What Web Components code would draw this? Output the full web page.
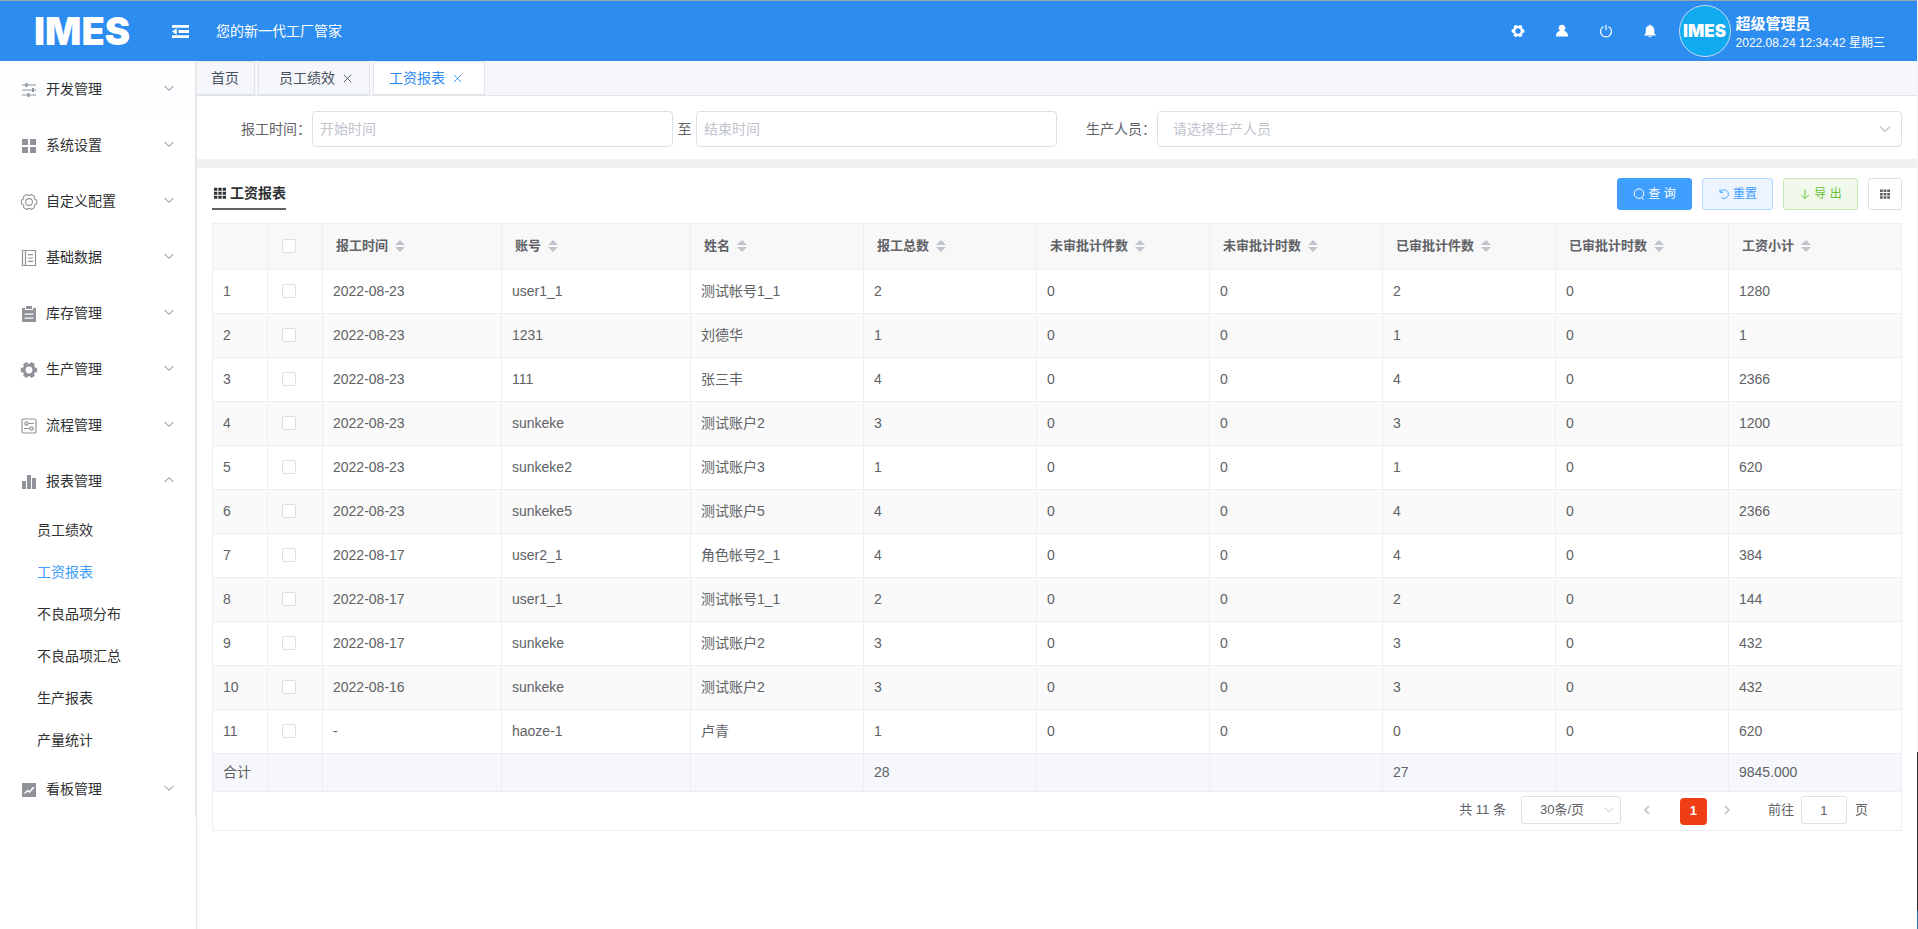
<!DOCTYPE html>
<html lang="zh-CN">
<head>
<meta charset="utf-8">
<title>IMES 工资报表</title>
<style>
  html, body { margin: 0; }
  body {
    font-family: "Liberation Sans", "Noto Sans CJK SC", sans-serif;
    font-size: 14px;
    line-height: 20px;
    color: #606266;
    background: #fff;
  }
</style>
</head>
<body>
<mes-app>
  <mes-header slot="header" slogan="您的新一代工厂管家" user="超级管理员" time="2022.08.24 12:34:42 星期三"></mes-header>
  <mes-menu slot="menu">
    <mes-menu-group icon="operation" label="开发管理" hovered></mes-menu-group>
    <mes-menu-group icon="menu" label="系统设置"></mes-menu-group>
    <mes-menu-group icon="setting" label="自定义配置"></mes-menu-group>
    <mes-menu-group icon="notebook" label="基础数据"></mes-menu-group>
    <mes-menu-group icon="order" label="库存管理"></mes-menu-group>
    <mes-menu-group icon="tools" label="生产管理"></mes-menu-group>
    <mes-menu-group icon="setup" label="流程管理"></mes-menu-group>
    <mes-menu-group icon="data" label="报表管理" open>
      <mes-menu-link>员工绩效</mes-menu-link>
      <mes-menu-link active>工资报表</mes-menu-link>
      <mes-menu-link>不良品项分布</mes-menu-link>
      <mes-menu-link>不良品项汇总</mes-menu-link>
      <mes-menu-link>生产报表</mes-menu-link>
      <mes-menu-link>产量统计</mes-menu-link>
    </mes-menu-group>
    <mes-menu-group icon="marketing" label="看板管理"></mes-menu-group>
  </mes-menu>
  <mes-tabs>
    <mes-tab>首页</mes-tab>
    <mes-tab closable>员工绩效</mes-tab>
    <mes-tab closable active>工资报表</mes-tab>
  </mes-tabs>
  <mes-filter></mes-filter>
  <mes-panel heading="工资报表">
    <mes-button slot="actions" kind="primary" icon="search">查 询</mes-button>
    <mes-button slot="actions" kind="plain" icon="refresh">重置</mes-button>
    <mes-button slot="actions" kind="success" icon="bottom">导 出</mes-button>
    <mes-button slot="actions" kind="icon" icon="grid" hint="列设置"></mes-button>
    <mes-wage-table></mes-wage-table>
    <mes-pagination></mes-pagination>
  </mes-panel>
</mes-app>

<script>
// Outline of a six-toothed gear centred in the 18-unit icon box.
const gear = (outer, inner) => {
  const points = [];
  for (let a = 0; a < 360; a += 60) {
    for (const [offset, r] of [[-23, inner], [-14, outer], [14, outer], [23, inner]]) {
      const t = (a + offset) * Math.PI / 180;
      points.push(`${(9 + r * Math.cos(t)).toFixed(2)} ${(9 + r * Math.sin(t)).toFixed(2)}`);
    }
  }
  return `M${points.join('L')}Z`;
};

const ICONS = {
  fold: '<path d="M0 2h18v3H0zM7 7.500h11v3H7zM0 13h18v3H0zM0 9l5-3.500v7z"/>',
  operation: '<path d="M2 4h14M2 9h14M2 14h14" fill="none" stroke="currentColor" stroke-width="1.200"/><path d="M5.500 2h2v4h-2zM12 7h2v4h-2zM7.500 12h2v4h-2z"/>',
  menu: '<path d="M2 2h6v6H2zM10 2h6v6h-6zM2 10h6v6H2zM10 10h6v6h-6z"/>',
  setting: `<g fill="none" stroke="currentColor" stroke-width="1.100" stroke-linejoin="round"><path d="${gear(7.8, 6.6)}"/><circle cx="9" cy="9" r="3.400"/></g>`,
  notebook: '<path d="M2.500 1.500h13v15h-13zM5.500 1.500v15" fill="none" stroke="currentColor" stroke-width="1.200"/><path d="M8 5h5v1.200H8zM8 8.400h5v1.200H8zM8 11.800h5V13H8z"/>',
  order: '<path fill-rule="evenodd" d="M2 3h3v2h8V3h3v14H2zM4.500 8.500v1.200h9V8.500zM4.500 12.500v1.200h9v-1.200z"/><path d="M6 1h6v3H6z"/>',
  tools: `<path fill-rule="evenodd" d="${gear(8.4, 6.4)}M9 5.600a3.400 3.400 0 1 0 0 6.800 3.400 3.400 0 0 0 0-6.800z"/>`,
  setup: '<g fill="none" stroke="currentColor" stroke-width="1.200"><rect x="2" y="2" width="14" height="14" rx="1.500"/><circle cx="6.500" cy="6.500" r="1.600"/><path d="M8.200 6.500H14M4 11.500h5.600"/><circle cx="11.500" cy="11.500" r="1.600"/></g>',
  data: '<path d="M2 8h4v8H2zM7 2h4v14H7zM12 5h4v11h-4z"/>',
  marketing: '<path fill-rule="evenodd" d="M2 2h14v14H2zM4 12.200l.9.900 2.700-2.700 2 1.700L14 7.200V6h-1.400L9.500 10 7.600 8.600z"/>',
  down: '<path d="M4 6.500 9 11.500l5-5" fill="none" stroke="currentColor" stroke-width="1.200"/>',
  up: '<path d="M4 11.500 9 6.500l5 5" fill="none" stroke="currentColor" stroke-width="1.200"/>',
  left: '<path d="M11.500 4 6.500 9l5 5" fill="none" stroke="currentColor" stroke-width="2.200"/>',
  right: '<path d="M6.500 4l5 5-5 5" fill="none" stroke="currentColor" stroke-width="2.200"/>',
  close: '<path d="M3 3l12 12M15 3L3 15" fill="none" stroke="currentColor" stroke-width="1.500"/>',
  user: '<path d="M9 1a4.300 4.300 0 0 1 2.600 7.800c3 .7 5 3 5.400 7.200H1c.4-4.200 2.400-6.500 5.400-7.200A4.300 4.300 0 0 1 9 1z"/>',
  power: '<path d="M6 3.200a7 7 0 1 0 6 0M9 1v7" fill="none" stroke="currentColor" stroke-width="1.500"/>',
  bell: '<path d="M8 2V1h2v1c3 .6 4.500 3 4.500 6v4l2 2v.8h-15V14l2-2V8c0-3 1.500-5.400 4.500-6zM6.500 15.600h5c-.5 1.800-4.500 1.800-5 0z"/>',
  search: '<path d="M12.500 14 16 17.300M9 1.300a7.200 7.200 0 1 1 0 14.400A7.200 7.200 0 0 1 9 1.300z" fill="none" stroke="currentColor" stroke-width="1.500"/>',
  refresh: '<path d="M3 2v4.500h4.500M3.300 6.300A6.500 6.500 0 1 1 5 14.200" fill="none" stroke="currentColor" stroke-width="1.400"/>',
  bottom: '<path d="M9 2v14M3.500 10.500 9 16l5.500-5.500" fill="none" stroke="currentColor" stroke-width="1.500"/>',
  grid: '<path d="M0 1h5v4.500H0zM6.500 1h5v4.500h-5zM13 1h5v4.500h-5zM0 7h5v4.500H0zM6.500 7h5v4.500h-5zM13 7h5v4.500h-5zM0 13h5v4.500H0zM6.500 13h5v4.500h-5zM13 13h5v4.500h-5z"/>'
};

const define = (name, render) => customElements.define(name, class extends HTMLElement {
  connectedCallback() {
    if (this.shadowRoot) return;
    const root = this.attachShadow({ mode: 'open' });
    const tpl = document.createElement('template');
    tpl.innerHTML = render(this);
    root.append(tpl.content.cloneNode(true));
  }
});
const attr = (el, n) => el.getAttribute(n) || '';

define('mes-icon', el => `
  <style>
    :host { display: inline-flex; flex: none; width: 18px; height: 18px; }
    svg { width: 100%; height: 100%; fill: currentColor; }
  </style>
  <svg viewBox="0 0 18 18" aria-hidden="true">${ICONS[attr(el, 'name')]}</svg>`);

define('mes-app', () => `
  <style>
    :host {
      display: grid;
      grid-template: auto 1fr / 197px minmax(0, 1fr) 1px;
      min-height: 100vh;
    }
    header { grid-column: 1 / 3; }
    aside { border-right: 1px solid #e6e6e6; }
    main { min-width: 0; }
    .edge {
      grid-area: 1 / 3 / 3 / 4;
      background: linear-gradient(#f4f4f4 81%, #2e2e2e 81% 98%, #1b6fb5 98%);
    }
  </style>
  <header><slot name="header"></slot></header>
  <aside><slot name="menu"></slot></aside>
  <main><slot></slot></main>
  <div class="edge"></div>`);

define('mes-logo', () => `
  <style>
    :host {
      display: block;
      font-family: Inter, sans-serif;
      font-weight: 900;
      font-size: 38px;
      line-height: 38px;
      color: #fff;
    }
  </style>IMES`);

define('mes-header', el => `
  <style>
    :host {
      display: flex;
      align-items: center;
      height: 60px;
      padding: 0 32px 0 34px;
      border-top: 1px solid #9aa5ad;
      background: #2d8cf0;
      color: #fff;
    }
    button { border: 0; padding: 0; background: none; color: inherit; display: flex; cursor: pointer; }
    .brand { width: 138px; }
    .fold mes-icon { width: 17px; height: 17px; }
    .slogan { flex: 1; margin-left: 27px; }
    nav { display: flex; gap: 30px; margin-right: 22px; }
    nav mes-icon { width: 14px; height: 14px; }
    .avatar {
      display: flex;
      align-items: center;
      justify-content: center;
      box-sizing: border-box;
      width: 52px;
      height: 52px;
      border: 1px solid #c8dcec;
      border-radius: 50%;
      background: #10aaf0;
    }
    .avatar mes-logo { font-size: 17px; line-height: 17px; }
    .who { margin-left: 5px; padding-top: 3px; }
    .name { font-size: 15px; font-weight: 700; }
    .time { font-size: 12px; line-height: 18px; }
  </style>
  <div class="brand"><mes-logo></mes-logo></div>
  <button class="fold" aria-label="折叠菜单"><mes-icon name="fold"></mes-icon></button>
  <div class="slogan">${attr(el, 'slogan')}</div>
  <nav>
    <button aria-label="设置"><mes-icon name="tools"></mes-icon></button>
    <button aria-label="用户"><mes-icon name="user"></mes-icon></button>
    <button aria-label="退出"><mes-icon name="power"></mes-icon></button>
    <button aria-label="消息"><mes-icon name="bell"></mes-icon></button>
  </nav>
  <div class="avatar"><mes-logo></mes-logo></div>
  <div class="who">
    <div class="name">${attr(el, 'user')}</div>
    <div class="time">${attr(el, 'time')}</div>
  </div>`);

define('mes-menu', () => `
  <style>
    :host { display: block; border-right: 1px solid #e6e6e6; }
  </style>
  <nav><slot></slot></nav>`);

define('mes-menu-group', el => `
  <style>
    :host { display: block; }
    :host([hovered]) button { background: #fcfeff; }
    button {
      display: flex;
      align-items: center;
      width: 100%;
      height: 56px;
      padding: 0 18px 0 20px;
      border: 0;
      background: none;
      font: inherit;
      color: #303133;
      text-align: left;
      cursor: pointer;
    }
    mes-icon { color: #909399; margin-top: 2px; }
    span { flex: 1; margin-left: 8px; }
    .arrow { width: 16px; height: 16px; margin-top: 0; margin-bottom: 2px; color: #a8abb2; }
  </style>
  <button aria-expanded="${el.hasAttribute('open')}">
    <mes-icon name="${attr(el, 'icon')}"></mes-icon>
    <span>${attr(el, 'label')}</span>
    <mes-icon class="arrow" name="${el.hasAttribute('open') ? 'up' : 'down'}"></mes-icon>
  </button>
  <slot></slot>`);

define('mes-menu-link', () => `
  <style>
    :host { display: block; }
    a { display: block; padding-left: 37px; line-height: 42px; color: #303133; text-decoration: none; }
    :host([active]) a { color: #409eff; }
  </style>
  <a href="#"><slot></slot></a>`);

define('mes-tabs', () => `
  <style>
    :host {
      display: flex;
      gap: 3px;
      height: 34px;
      background: #f5f7fb;
      border-bottom: 1px solid #e1e4ea;
    }
  </style>
  <slot></slot>`);

define('mes-tab', el => `
  <style>
    :host {
      display: flex;
      align-items: center;
      gap: 7px;
      box-sizing: border-box;
      padding: 0 16px 0 20px;
      border: 1px solid #dfe2e8;
      border-radius: 3px 3px 0 0;
      color: #495060;
    }
    :host(:not([closable])) { padding: 0 15px 0 14px; border-left: 0; }
    :host([active]) { padding: 0 21px 0 15px; background: #fff; color: #2d8cf0; }
    a { color: inherit; text-decoration: none; }
    button { display: flex; padding: 0; border: 0; background: none; color: inherit; }
    mes-icon { width: 11px; height: 11px; }
  </style>
  <a href="#"><slot></slot></a>
  ${el.hasAttribute('closable') ? '<button aria-label="关闭"><mes-icon name="close"></mes-icon></button>' : ''}`);

define('mes-filter', () => `
  <style>
    :host { display: block; border-bottom: 9px solid #f0f0f0; }
    form {
      display: grid;
      grid-template-columns: 1fr 1fr;
      gap: 29px;
      padding: 15px 15px 12px 44px;
    }
    .field { display: flex; align-items: center; }
    label { flex: none; width: 71px; }
    .to { width: 23px; text-align: center; }
    input, select {
      box-sizing: border-box;
      min-width: 0;
      width: 100%;
      height: 36px;
      padding: 0 7px;
      border: 1px solid #dcdfe6;
      border-radius: 4px;
      background: #fff;
      font: inherit;
      color: #606266;
    }
    input { flex: 1; }
    input::placeholder { color: #c0c4cc; }
    select { appearance: none; padding: 0 15px; color: #c0c4cc; }
    .pick { position: relative; flex: 1; }
    .pick mes-icon { position: absolute; right: 8px; top: 9px; color: #c0c4cc; pointer-events: none; }
  </style>
  <form>
    <div class="field">
      <label for="from">报工时间：</label>
      <input id="from" placeholder="开始时间">
      <span class="to">至</span>
      <input id="until" placeholder="结束时间" aria-label="结束时间">
    </div>
    <div class="field">
      <label for="worker">生产人员：</label>
      <div class="pick">
        <select id="worker"><option>请选择生产人员</option></select>
        <mes-icon name="down"></mes-icon>
      </div>
    </div>
  </form>`);

define('mes-button', el => `
  <style>
    :host { display: block; }
    button {
      display: flex;
      align-items: center;
      justify-content: center;
      gap: 3px;
      height: 32px;
      padding: 0 15px;
      border: 1px solid #dcdfe6;
      border-radius: 3px;
      background: #fff;
      font: inherit;
      font-size: 12px;
      color: #606266;
      cursor: pointer;
    }
    mes-icon { width: 12px; height: 12px; }
    :host([kind="primary"]) button { min-width: 75px; background: #409eff; border-color: #409eff; color: #fff; }
    :host([kind="plain"]) button { background: #ecf5ff; border-color: #b3d8ff; color: #409eff; }
    :host([kind="success"]) button { min-width: 75px; background: #f0f9eb; border-color: #c2e7b0; color: #67c23a; }
    :host([kind="icon"]) button { padding: 0 11px; }
    :host([kind="icon"]) mes-icon { width: 10px; height: 10px; }
  </style>
  <button aria-label="${attr(el, 'hint') || el.textContent}">
    <mes-icon name="${attr(el, 'icon')}"></mes-icon>
    <slot></slot>
  </button>`);

define('mes-panel', el => `
  <style>
    :host { display: block; padding: 10px 15px; }
    .bar { display: flex; align-items: center; gap: 10px; margin-bottom: 13px; }
    h2 {
      display: flex;
      align-items: center;
      gap: 4px;
      margin: 0 auto 0 0;
      padding: 4px 0 5px 2px;
      border-bottom: 2px solid #606266;
      font-size: 14px;
      color: #303133;
    }
    h2 mes-icon { width: 12px; height: 12px; }
    .box { border: solid #ebeef5; border-width: 1px 0 1px 1px; }
  </style>
  <div class="bar">
    <h2><mes-icon name="grid"></mes-icon>${attr(el, 'heading')}</h2>
    <slot name="actions"></slot>
  </div>
  <div class="box"><slot></slot></div>`);

const HEADS = ['报工时间', '账号', '姓名', '报工总数', '未审批计件数', '未审批计时数', '已审批计件数', '已审批计时数', '工资小计'];
const ROWS = [
  ['2022-08-23', 'user1_1', '测试帐号1_1', 2, 0, 0, 2, 0, 1280],
  ['2022-08-23', '1231', '刘德华', 1, 0, 0, 1, 0, 1],
  ['2022-08-23', '111', '张三丰', 4, 0, 0, 4, 0, 2366],
  ['2022-08-23', 'sunkeke', '测试账户2', 3, 0, 0, 3, 0, 1200],
  ['2022-08-23', 'sunkeke2', '测试账户3', 1, 0, 0, 1, 0, 620],
  ['2022-08-23', 'sunkeke5', '测试账户5', 4, 0, 0, 4, 0, 2366],
  ['2022-08-17', 'user2_1', '角色帐号2_1', 4, 0, 0, 4, 0, 384],
  ['2022-08-17', 'user1_1', '测试帐号1_1', 2, 0, 0, 2, 0, 144],
  ['2022-08-17', 'sunkeke', '测试账户2', 3, 0, 0, 3, 0, 432],
  ['2022-08-16', 'sunkeke', '测试账户2', 3, 0, 0, 3, 0, 432],
  ['-', 'haoze-1', '卢青', 1, 0, 0, 0, 0, 620]
];
const SUMS = ['', '', '', 28, '', '', 27, '', '9845.000'];
const cells = list => list.map(v => `<td>${v}</td>`).join('');

define('mes-wage-table', () => `
  <style>
    :host { display: block; }
    table { width: 100%; table-layout: fixed; border-collapse: separate; border-spacing: 0; }
    .narrow { width: 55px; }
    .date { width: 179px; }
    .account { width: 189px; }
    th, td {
      box-sizing: border-box;
      height: 44px;
      padding: 0 10px 1px;
      border-right: 1px solid #ebeef5;
      border-bottom: 1px solid #ebeef5;
      text-align: left;
      white-space: nowrap;
    }
    th { height: 46px; padding: 0 13px 1px; background: #f8f8f9; font-size: 13px; color: #606266; }
    tbody tr:nth-child(even) { background: #fafafa; }
    tfoot td { height: 38px; background: #f5f7fa; }
    .check { padding: 0 14px 1px; }
    input {
      appearance: none;
      display: block;
      box-sizing: border-box;
      width: 14px;
      height: 14px;
      margin: 0;
      border: 1px solid #dcdfe6;
      border-radius: 2px;
      background: #fff;
    }
    .head { display: flex; align-items: center; gap: 7px; }
    .sort { display: grid; gap: 2px; padding: 0; border: 0; background: none; }
    .sort::before, .sort::after { content: ""; border: 5px solid transparent; }
    .sort::before { border-top-width: 0; border-bottom-color: #c0c4cc; }
    .sort::after { border-bottom-width: 0; border-top-color: #c0c4cc; }
  </style>
  <table>
    <colgroup><col class="narrow"><col class="narrow"><col class="date"><col class="account"><col span="7"></colgroup>
    <thead><tr><th></th><th class="check"><input type="checkbox" aria-label="全选"></th>
      ${HEADS.map(h => `<th><div class="head">${h}<button class="sort" aria-label="排序"></button></div></th>`).join('')}
    </tr></thead>
    <tbody>${ROWS.map((r, i) => `<tr><td>${i + 1}</td><td class="check"><input type="checkbox" aria-label="选择"></td>${cells(r)}</tr>`).join('')}</tbody>
    <tfoot><tr><td>合计</td><td></td>${cells(SUMS)}</tr></tfoot>
  </table>`);

define('mes-pagination', () => `
  <style>
    :host {
      display: flex;
      align-items: center;
      justify-content: flex-end;
      height: 36px;
      padding: 0 33px 2px 0;
      border-right: 1px solid #ebeef5;
      font-size: 13px;
    }
    select, input {
      box-sizing: border-box;
      height: 28px;
      border: 1px solid #dcdfe6;
      border-radius: 3px;
      background: #fff;
      font: inherit;
      color: #606266;
    }
    .size { position: relative; margin: 0 17px 0 15px; }
    select { appearance: none; display: block; width: 100px; padding: 0 18px; }
    .size mes-icon { position: absolute; right: 5px; top: 7px; width: 14px; height: 14px; color: #c0c4cc; pointer-events: none; }
    button { display: flex; align-items: center; justify-content: center; width: 18px; height: 27px; padding: 0; border: 0; background: none; color: #c0c4cc; font: inherit; }
    button mes-icon { width: 14px; height: 14px; }
    .page { width: 27px; margin: 2px 11px 0 24px; border-radius: 4px; background: #f03e14; color: #fff; font-weight: 700; }
    label { margin-left: 32px; }
    input { width: 46px; margin: 0 8px 0 7px; padding: 0; text-align: center; }
  </style>
  <span>共 11 条</span>
  <div class="size">
    <select aria-label="每页条数"><option>30条/页</option></select>
    <mes-icon name="down"></mes-icon>
  </div>
  <button aria-label="上一页"><mes-icon name="left"></mes-icon></button>
  <button class="page">1</button>
  <button aria-label="下一页"><mes-icon name="right"></mes-icon></button>
  <label for="jump">前往</label>
  <input id="jump" value="1">
  <span>页</span>`);
</script>
</body>
</html>
